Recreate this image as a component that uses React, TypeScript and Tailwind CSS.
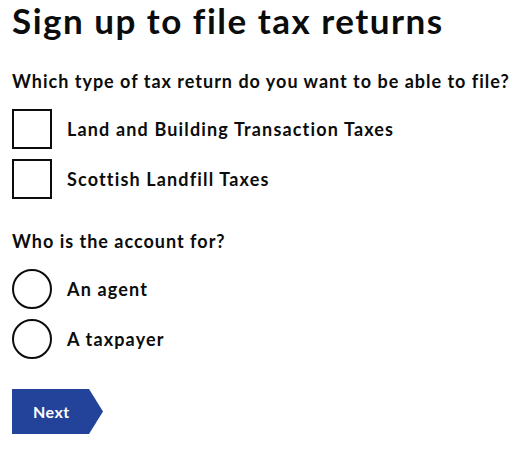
export default function App() {
  const taxes = ['Land and Building Transaction Taxes', 'Scottish Landfill Taxes'];
  const accounts = ['An agent', 'A taxpayer'];

  return (
    <div className="min-h-screen bg-white pl-3 text-[#0b0c0c] font-['Lato','Liberation_Sans',sans-serif]">
      <h1 className="text-[35px] font-bold leading-[41px] tracking-[1.5px]">Sign up to file tax returns</h1>

      <fieldset className="mt-[28px]">
        <legend className="text-[18px] font-bold leading-6 tracking-[1px]">
          Which type of tax return do you want to be able to file?
        </legend>
        <div className="mt-4 flex flex-col gap-[10px]">
          {taxes.map((t) => (
            <label key={t} className="flex items-center gap-[15px]">
              <span className="h-10 w-10 shrink-0 border-2 border-[#0b0c0c] bg-white" />
              <span className="text-[18px] font-bold tracking-[1.15px]">{t}</span>
            </label>
          ))}
        </div>
      </fieldset>

      <fieldset className="mt-[30px]">
        <legend className="text-[18px] font-bold leading-6 tracking-[1px]">Who is the account for?</legend>
        <div className="mt-4 flex flex-col gap-[10px]">
          {accounts.map((a) => (
            <label key={a} className="flex items-center gap-[15px]">
              <span className="h-10 w-10 shrink-0 rounded-full border-2 border-[#0b0c0c] bg-white" />
              <span className="text-[18px] font-bold tracking-[1.15px]">{a}</span>
            </label>
          ))}
        </div>
      </fieldset>

      <button
        type="button"
        className="mt-[30px] flex h-[45px] w-[91px] items-center pl-[21px] text-[16px] font-bold tracking-[0.5px] text-white bg-[#23429a] [clip-path:polygon(0_0,77px_0,91px_50%,77px_100%,0_100%)]"
      >
        Next
      </button>
    </div>
  );
}
